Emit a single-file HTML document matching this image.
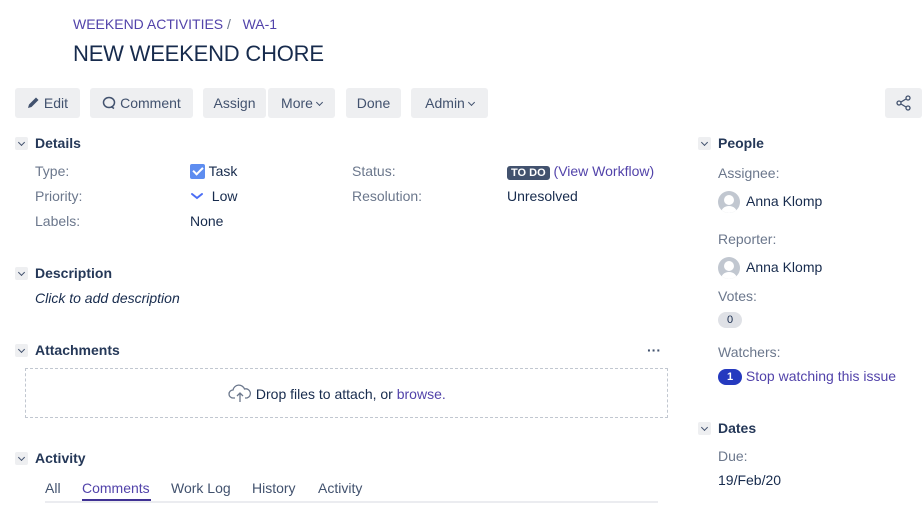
<!DOCTYPE html><html><head><style>
body{margin:0;width:922px;height:514px;background:#fff;font-family:"Liberation Sans",sans-serif;font-size:14px;color:#172B4D;position:relative;overflow:hidden}
.a{position:absolute;white-space:nowrap}
.lab{color:#6B778C}
.lnk{color:#5243AA}
.btn{position:absolute;top:88px;height:30px;background:#EEEFF1;border-radius:3px;line-height:30px;color:#42526E;text-align:center}
.h{font-weight:bold;color:#253858;font-size:14px}
.tw{position:absolute;width:13px;height:13px;background:#EEEFF1;border-radius:2px}
.tw:after{content:"";position:absolute;left:4px;top:3px;width:4px;height:4px;border-right:1.5px solid #42526E;border-bottom:1.5px solid #42526E;transform:rotate(45deg)}
.cv{display:inline-block;width:4px;height:4px;border-right:1.5px solid #42526E;border-bottom:1.5px solid #42526E;transform:rotate(45deg);vertical-align:3px;margin-left:4px}
.av{position:absolute;width:22px;height:22px;border-radius:50%;background:#C1C7D0;overflow:hidden}
.av:before{content:"";position:absolute;left:6px;top:4px;width:10px;height:10px;border-radius:50%;background:#fff}
.av:after{content:"";position:absolute;left:3px;top:15px;width:16px;height:14px;border-radius:50%;background:#fff}
</style></head><body>
<div class="a lnk" style="left:73px;top:16px;font-size:14px">WEEKEND ACTIVITIES <span style="color:#6B778C">/</span>&nbsp;&nbsp; WA-1</div>
<div class="a" style="left:73px;top:41px;font-size:22px;color:#172B4D;letter-spacing:-0.2px">NEW WEEKEND CHORE</div>

<div class="btn" style="left:15px;width:65px"><svg width="13" height="13" viewBox="0 0 13 13" style="vertical-align:-1px"><path d="M1 12l1-3.5 7-7 2.5 2.5-7 7z" fill="#42526E"/></svg> Edit</div>
<div class="btn" style="left:90px;width:103px"><svg width="14" height="14" viewBox="0 0 14 14" style="vertical-align:-2px"><ellipse cx="7" cy="6.5" rx="5.5" ry="5" fill="none" stroke="#42526E" stroke-width="1.5"/><path d="M9 10.5l3 2" stroke="#42526E" stroke-width="1.5"/></svg> Comment</div>
<div class="btn" style="left:203px;width:63px">Assign</div>
<div class="btn" style="left:268px;width:67px">More<span class="cv"></span></div>
<div class="btn" style="left:346px;width:55px">Done</div>
<div class="btn" style="left:411px;width:77px">Admin<span class="cv"></span></div>
<div class="btn" style="left:885px;width:37px"><svg width="16" height="16" viewBox="0 0 16 16" style="vertical-align:-3px"><circle cx="12" cy="3" r="2" fill="none" stroke="#42526E" stroke-width="1.3"/><circle cx="3" cy="8" r="2" fill="none" stroke="#42526E" stroke-width="1.3"/><circle cx="12" cy="13" r="2" fill="none" stroke="#42526E" stroke-width="1.3"/><path d="M5 7l5-3M5 9l5 3" stroke="#42526E" stroke-width="1.3"/></svg></div>

<div class="tw" style="left:15px;top:137px"></div><div class="a h" style="left:35px;top:135px">Details</div>
<div class="a lab" style="left:35px;top:163px">Type:</div>
<div class="a lab" style="left:35px;top:188px">Priority:</div>
<div class="a lab" style="left:35px;top:213px">Labels:</div>
<div class="a" style="left:190px;top:163px"><span style="display:inline-block;width:15px;height:15px;background:#5E8DF0;border-radius:2px;vertical-align:-3px;position:relative"><span style="position:absolute;left:5px;top:1px;width:4px;height:8px;border-right:2px solid #fff;border-bottom:2px solid #fff;transform:rotate(45deg)"></span></span> Task</div>
<div class="a" style="left:190px;top:188px"><svg width="14" height="8" viewBox="0 0 14 8" style="vertical-align:1px"><path d="M2 2l5 4 5-4" fill="none" stroke="#4C6EF5" stroke-width="2" stroke-linecap="round"/></svg>&nbsp; Low</div>
<div class="a" style="left:190px;top:213px">None</div>
<div class="a lab" style="left:352px;top:163px">Status:</div>
<div class="a lab" style="left:352px;top:188px">Resolution:</div>
<div class="a" style="left:507px;top:163px"><span style="background:#42526E;color:#fff;font-size:11px;font-weight:bold;padding:1px 4px;border-radius:3px">TO DO</span> <span class="lnk">(View Workflow)</span></div>
<div class="a" style="left:507px;top:188px">Unresolved</div>

<div class="tw" style="left:15px;top:267px"></div><div class="a h" style="left:35px;top:265px">Description</div>
<div class="a" style="left:35px;top:290px;font-style:italic;color:#172B4D">Click to add description</div>

<div class="tw" style="left:15px;top:344px"></div><div class="a h" style="left:35px;top:342px">Attachments</div>
<div class="a" style="left:647px;top:342px;font-weight:bold;color:#42526E">&middot;&middot;&middot;</div>
<div class="a" style="left:25px;top:368px;width:641px;height:48px;border:1px dashed #C1C7D0"></div>
<div class="a" style="left:228px;top:383px"><svg width="24" height="20" viewBox="0 0 24 20" style="vertical-align:-4px"><path d="M7 15H5a4 4 0 0 1 0-8 6 6 0 0 1 11.5-1A4.5 4.5 0 0 1 19 15h-2" fill="none" stroke="#6B778C" stroke-width="1.3"/><path d="M12 19V10M9 13l3-3 3 3" fill="none" stroke="#6B778C" stroke-width="1.3"/></svg> Drop files to attach, or <span class="lnk">browse.</span></div>

<div class="tw" style="left:15px;top:452px"></div><div class="a h" style="left:35px;top:450px">Activity</div>
<div class="a" style="left:45px;top:480px;color:#42526E">All</div>
<div class="a lnk" style="left:82px;top:480px">Comments</div>
<div class="a" style="left:82px;top:499px;width:69px;height:2px;background:#403294"></div>
<div class="a" style="left:171px;top:480px;color:#42526E">Work Log</div>
<div class="a" style="left:252px;top:480px;color:#42526E">History</div>
<div class="a" style="left:318px;top:480px;color:#42526E">Activity</div>
<div class="a" style="left:45px;top:501px;width:613px;height:2px;background:#EBECF0"></div>

<div class="tw" style="left:698px;top:137px"></div><div class="a h" style="left:718px;top:135px">People</div>
<div class="a lab" style="left:718px;top:165px">Assignee:</div>
<div class="av" style="left:718px;top:191px"></div><div class="a" style="left:746px;top:193px">Anna Klomp</div>
<div class="a lab" style="left:718px;top:231px">Reporter:</div>
<div class="av" style="left:718px;top:257px"></div><div class="a" style="left:746px;top:259px">Anna Klomp</div>
<div class="a lab" style="left:718px;top:288px">Votes:</div>
<div class="a" style="left:718px;top:312px;width:24px;height:16px;border-radius:8px;background:#DFE1E6;font-size:11px;text-align:center;line-height:16px">0</div>
<div class="a lab" style="left:718px;top:344px">Watchers:</div>
<div class="a" style="left:718px;top:368px"><span style="display:inline-block;width:24px;height:16px;border-radius:8px;background:#253ABF;color:#fff;font-size:11px;font-weight:bold;text-align:center;line-height:16px;vertical-align:1px">1</span> <span class="lnk">Stop watching this issue</span></div>

<div class="tw" style="left:698px;top:422px"></div><div class="a h" style="left:718px;top:420px">Dates</div>
<div class="a lab" style="left:718px;top:448px">Due:</div>
<div class="a" style="left:718px;top:472px">19/Feb/20</div>
</body></html>
